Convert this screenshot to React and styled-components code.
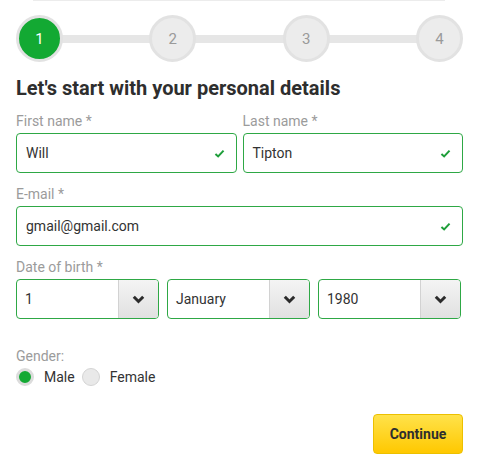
import React from "react";
import styled, { createGlobalStyle } from "styled-components";

const GlobalStyle = createGlobalStyle`
  body {
    margin: 0;
    background: #fff;
    font-family: Roboto, "Liberation Sans", Arial, sans-serif;
  }
`;

const steps = [1, 2, 3, 4];

const Check = () => (
  <CheckIcon viewBox="0 0 12 10">
    <path d="M1.5 5.5 L4.5 8.3 L10.5 1.8" fill="none" stroke="#1e9e3a" strokeWidth="2.2" />
  </CheckIcon>
);

const Chevron = () => (
  <svg width="13" height="9" viewBox="0 0 13 9">
    <path d="M1.8 1.8 L6.5 6.5 L11.2 1.8" fill="none" stroke="#2b2b2b" strokeWidth="3" />
  </svg>
);

const TextField = ({ label, value }) => (
  <Field>
    <Label>{label}</Label>
    <InputBox>
      <span>{value}</span>
      <Check />
    </InputBox>
  </Field>
);

const SelectField = ({ value }) => (
  <SelectBox>
    <SelectValue>{value}</SelectValue>
    <SelectButton>
      <Chevron />
    </SelectButton>
  </SelectBox>
);

const App = () => {
  return (
    <Page>
      <GlobalStyle />
      <TopEdge />
      <Stepper>
        {steps.map((n, i) => (
          <React.Fragment key={n}>
            {i > 0 && <Track />}
            <Step $active={n === 1}>{n}</Step>
          </React.Fragment>
        ))}
      </Stepper>

      <Form>
        <Heading>Let's start with your personal details</Heading>

        <TwoCols>
          <TextField label="First name *" value="Will" />
          <TextField label="Last name *" value="Tipton" />
        </TwoCols>

        <TextField label="E-mail *" value="gmail@gmail.com" />

        <Field>
          <Label>Date of birth *</Label>
          <ThreeCols>
            <SelectField value="1" />
            <SelectField value="January" />
            <SelectField value="1980" />
          </ThreeCols>
        </Field>

        <GenderGroup>
          <Label>Gender:</Label>
          <RadioRow>
            <RadioOption>
              <Radio $checked />
              Male
            </RadioOption>
            <RadioOption>
              <Radio />
              Female
            </RadioOption>
          </RadioRow>
        </GenderGroup>

        <Actions>
          <ContinueButton>Continue</ContinueButton>
        </Actions>
      </Form>
    </Page>
  );
};

const Page = styled.div`
  width: 478px;
  height: 468px;
  overflow: hidden;
`;

const TopEdge = styled.div`
  height: 1px;
  margin: 0 33px;
  background: #ececec;
`;

const Stepper = styled.div`
  display: flex;
  align-items: center;
  padding: 14px 15px 0 16px;
`;

const Track = styled.div`
  flex: 1;
  height: 8px;
  margin: 0 -2px;
  background: #e6e6e6;
`;

const Step = styled.div`
  position: relative;
  z-index: 1;
  box-sizing: border-box;
  width: 47px;
  height: 47px;
  border-radius: 50%;
  border: 3px solid #e2e2e2;
  background: ${(p) => (p.$active ? "#13a933" : "#ececec")};
  color: ${(p) => (p.$active ? "#fff" : "#9a9a9a")};
  display: flex;
  align-items: center;
  justify-content: center;
  font-size: 15px;
`;

const Form = styled.div`
  padding: 0 15px 0 16px;
  display: flex;
  flex-direction: column;
  gap: 12px;
`;

const Heading = styled.h1`
  margin: 14px 0 0;
  font-size: 20px;
  line-height: 24px;
  font-weight: 700;
  color: #2e2e2e;
`;

const TwoCols = styled.div`
  display: grid;
  grid-template-columns: 1fr 1fr;
  gap: 6px;
`;

const ThreeCols = styled.div`
  display: grid;
  grid-template-columns: 1fr 1fr 1fr;
  gap: 8px;
  margin-right: 2px;
`;

const Field = styled.div`
  display: flex;
  flex-direction: column;
  gap: 3px;
`;

const Label = styled.div`
  font-size: 14px;
  line-height: 18px;
  color: #9b9b9b;
`;

const InputBox = styled.div`
  box-sizing: border-box;
  height: 40px;
  border: 1px solid #2ea845;
  border-radius: 4px;
  padding: 0 11px 0 9px;
  display: flex;
  align-items: center;
  justify-content: space-between;
  font-size: 14px;
  color: #333;
`;

const CheckIcon = styled.svg`
  width: 11px;
  height: 9px;
`;

const SelectBox = styled.div`
  box-sizing: border-box;
  height: 40px;
  border: 1px solid #2ea845;
  border-radius: 4px;
  display: flex;
  overflow: hidden;
`;

const SelectValue = styled.div`
  flex: 1;
  display: flex;
  align-items: center;
  padding-left: 8px;
  font-size: 14px;
  color: #333;
`;

const SelectButton = styled.div`
  width: 39px;
  border-left: 1px solid #d2d2d2;
  background: linear-gradient(#f4f4f4, #e1e1e1);
  display: flex;
  align-items: center;
  justify-content: center;
`;

const GenderGroup = styled.div`
  margin-top: 16px;
  display: flex;
  flex-direction: column;
  gap: 2px;
`;

const RadioRow = styled.div`
  display: flex;
  align-items: center;
  gap: 7px;
`;

const RadioOption = styled.label`
  display: flex;
  align-items: center;
  gap: 10px;
  font-size: 14px;
  color: #333;
  height: 20px;
`;

const Radio = styled.span`
  box-sizing: border-box;
  width: 18px;
  height: 18px;
  border-radius: 50%;
  border: ${(p) => (p.$checked ? "3px solid #dcdcdc" : "1px solid #d4d4d4")};
  background: ${(p) => (p.$checked ? "#13a933" : "#e9e9e9")};
`;

const Actions = styled.div`
  display: flex;
  justify-content: flex-end;
  margin-top: 15px;
`;

const ContinueButton = styled.button`
  box-sizing: border-box;
  width: 90px;
  height: 40px;
  border: 1px solid #ecc000;
  border-radius: 4px;
  background: linear-gradient(#ffe24a, #ffc800);
  font-family: Roboto, "Liberation Sans", Arial, sans-serif;
  font-size: 14px;
  font-weight: 700;
  color: #2e2e2e;
`;

export default App;
